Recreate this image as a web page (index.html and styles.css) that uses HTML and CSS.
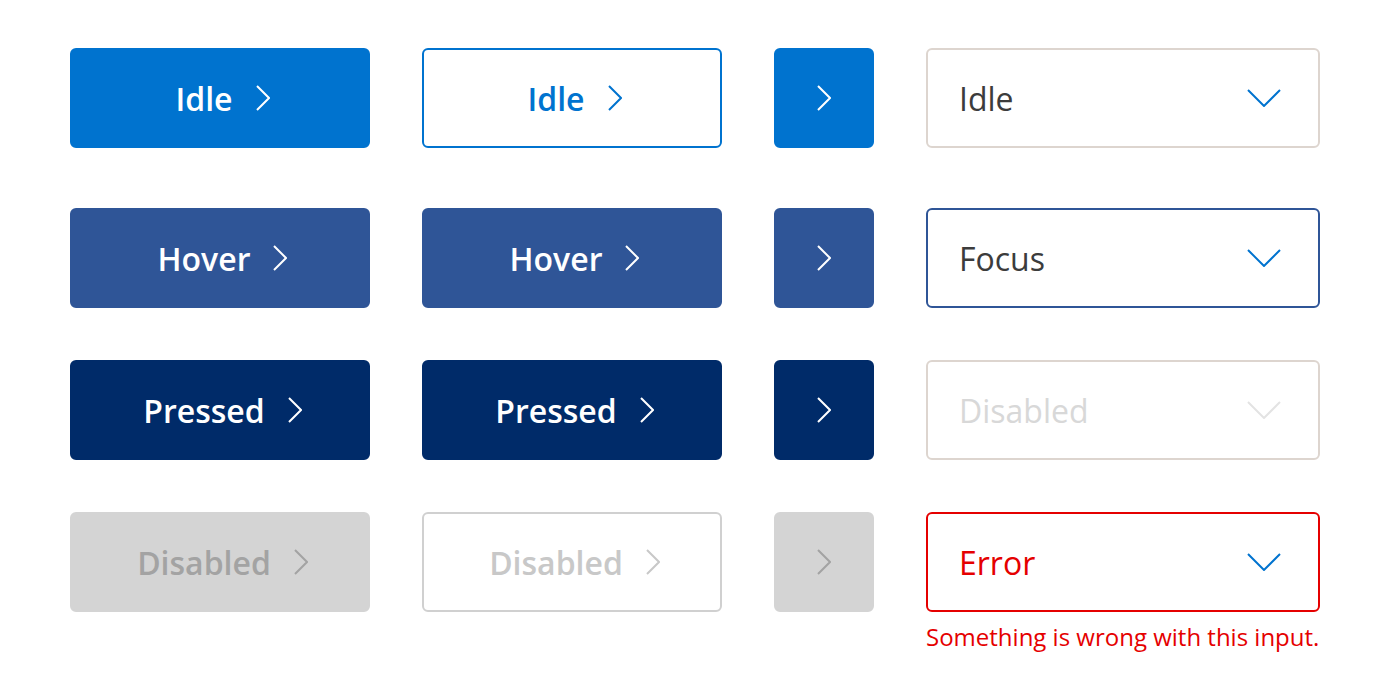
FILE: index.html
```html
<!DOCTYPE html>
<html lang="en">
<head>
<meta charset="utf-8">
<link rel="stylesheet" href="styles.css">
</head>
<body>
<svg width="0" height="0" style="position:absolute">
  <defs>
    <symbol id="chev-r" viewBox="0 0 14 26"><path d="M1 1 L13 13 L1 25" fill="none" stroke="currentColor" stroke-width="2"/></symbol>
    <symbol id="chev-d" viewBox="0 0 34 18"><path d="M1 1 L17 17 L33 1" fill="none" stroke="currentColor" stroke-width="2"/></symbol>
  </defs>
</svg>
<main class="board">
  <div class="row row-first">
    <button class="btn btn-primary idle">Idle<svg class="ic-r"><use href="#chev-r"/></svg></button>
    <button class="btn btn-outline idle">Idle<svg class="ic-r"><use href="#chev-r"/></svg></button>
    <button class="btn btn-icon idle"><svg class="ic-r"><use href="#chev-r"/></svg></button>
    <div class="field"><div class="select s-idle"><span>Idle</span><svg class="ic-d"><use href="#chev-d"/></svg></div></div>
  </div>
  <div class="row">
    <button class="btn btn-primary hover">Hover<svg class="ic-r"><use href="#chev-r"/></svg></button>
    <button class="btn btn-outline hover">Hover<svg class="ic-r"><use href="#chev-r"/></svg></button>
    <button class="btn btn-icon hover"><svg class="ic-r"><use href="#chev-r"/></svg></button>
    <div class="field"><div class="select s-focus"><span>Focus</span><svg class="ic-d"><use href="#chev-d"/></svg></div></div>
  </div>
  <div class="row">
    <button class="btn btn-primary pressed">Pressed<svg class="ic-r"><use href="#chev-r"/></svg></button>
    <button class="btn btn-outline pressed">Pressed<svg class="ic-r"><use href="#chev-r"/></svg></button>
    <button class="btn btn-icon pressed"><svg class="ic-r"><use href="#chev-r"/></svg></button>
    <div class="field"><div class="select s-disabled"><span>Disabled</span><svg class="ic-d"><use href="#chev-d"/></svg></div></div>
  </div>
  <div class="row">
    <button class="btn btn-primary disabled">Disabled<svg class="ic-r"><use href="#chev-r"/></svg></button>
    <button class="btn btn-outline disabled">Disabled<svg class="ic-r"><use href="#chev-r"/></svg></button>
    <button class="btn btn-icon disabled"><svg class="ic-r"><use href="#chev-r"/></svg></button>
    <div class="field">
      <div class="select s-error"><span>Error</span><svg class="ic-d"><use href="#chev-d"/></svg></div>
      <p class="error-msg">Something is wrong with this input.</p>
    </div>
  </div>
</main>
</body>
</html>
```

FILE: styles.css
```css
* { box-sizing: border-box; }
html, body { margin: 0; padding: 0; background: #fff; }
body {
  font-family: "Open Sans", "Noto Sans", sans-serif;
  width: 1392px;
  height: 688px;
  overflow: hidden;
}
.board {
  display: flex;
  flex-direction: column;
  gap: 52px;
  padding: 48px 0 0 70px;
}
.row {
  display: flex;
  gap: 52px;
  align-items: flex-start;
}
.row-first { margin-bottom: 8px; }

.btn {
  height: 100px;
  border-radius: 6px;
  border: 2px solid transparent;
  font-family: inherit;
  font-size: 32px;
  font-weight: 600;
  display: flex;
  align-items: center;
  justify-content: center;
  gap: 23px;
  padding: 0;
  color: #fff;
}
.btn-primary, .btn-outline { width: 300px; padding-left: 5px; }
.btn-icon { width: 100px; }
.ic-r { width: 14px; height: 26px; display: block; }
.ic-d { width: 34px; height: 18px; display: block; color: #0073cf; }

.btn.idle { background: #0073cf; border-color: #0073cf; }
.btn-outline.idle { background: #fff; color: #0073cf; }
.btn.hover { background: #2f5597; border-color: #2f5597; }
.btn.pressed { background: #002b69; border-color: #002b69; }
.btn.disabled { background: #d4d4d4; border-color: #d4d4d4; color: #a3a3a3; }
.btn-outline.disabled { background: #fff; border-color: #d0d0d0; color: #c8c8c8; }

.field { width: 394px; }
.select {
  height: 100px;
  border: 2px solid #ddd5cf;
  border-radius: 6px;
  display: flex;
  align-items: center;
  justify-content: space-between;
  padding: 0 37px 0 31px;
  font-size: 32px;
  color: #3c3c3c;
}
.s-focus { border-color: #2f5597; }
.s-disabled { color: #d8d8d8; }
.s-disabled .ic-d { color: #e3e3e3; }
.s-error { border-color: #e50000; color: #e50000; }
.error-msg {
  margin: 9px 0 0;
  color: #e50000;
  font-size: 24px;
  line-height: 32px;
}
```
